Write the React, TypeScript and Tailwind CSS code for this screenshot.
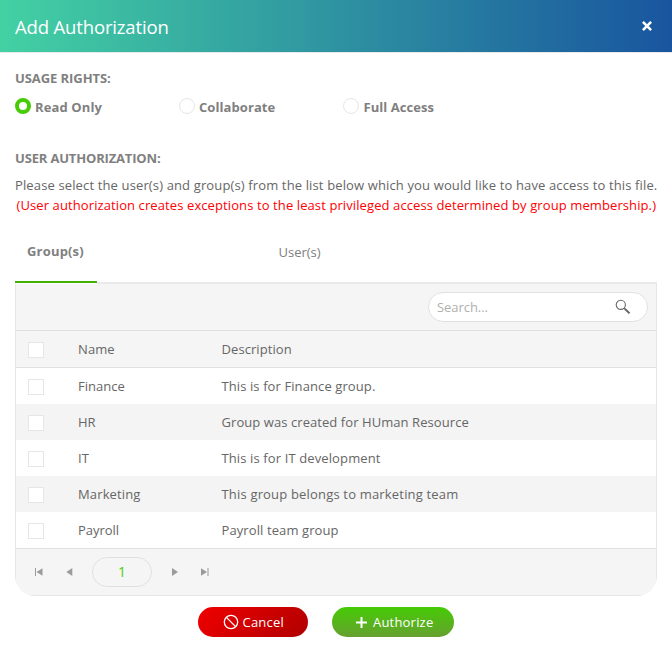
import type { ReactNode } from "react";

const groups = [
  { name: "Finance", description: "This is for Finance group.", nameCls: "tracking-[0px]", descCls: "tracking-[0.1px]" },
  { name: "HR", description: "Group was created for HUman Resource", nameCls: "tracking-[0px]", descCls: "tracking-[0.07px]" },
  { name: "IT", description: "This is for IT development", nameCls: "tracking-[0px]", descCls: "tracking-[0.12px]" },
  { name: "Marketing", description: "This group belongs to marketing team", nameCls: "tracking-[0.14px]", descCls: "tracking-[0.18px]" },
  { name: "Payroll", description: "Payroll team group", nameCls: "tracking-[-0.05px]", descCls: "tracking-[0.1px]" },
];

function Radio({ label, checked = false, cls }: { label: string; checked?: boolean; cls: string }) {
  return (
    <label className="flex w-[164px] items-center">
      <span
        className={
          checked
            ? "size-4 rounded-full border-4 border-[#46cb05] bg-white"
            : "size-4 rounded-full border border-[#e6e6e6] bg-white"
        }
      />
      <span className={"ml-1 pt-0.5 text-[13px] leading-4 font-bold whitespace-nowrap text-[#808080] " + cls}>{label}</span>
    </label>
  );
}

function Checkbox() {
  return <span className="mt-px ml-3 block size-4 border border-[#e6e6e6] bg-white" />;
}

function Row({ name, description, nameCls, descCls, className }: { name: string; description: string; nameCls: string; descCls: string; className: string }) {
  return (
    <div className={"flex h-9 items-center text-[13px] whitespace-nowrap " + className}>
      <div className="w-[62px]"><Checkbox /></div>
      <div className="w-[143px] pt-0.5"><span className={nameCls}>{name}</span></div>
      <div className="pt-0.5 pl-[0.5px]"><span className={descCls}>{description}</span></div>
    </div>
  );
}

function PagerIcon({ children, className }: { children: ReactNode; className: string }) {
  return (
    <svg viewBox="0 0 8 9" className={"h-[9px] w-2 " + className} fill="#9b9b9b">
      {children}
    </svg>
  );
}

export default function App() {
  return (
    <div className="h-[657px] w-[672px] overflow-hidden bg-white font-['Open_Sans','Noto_Sans',sans-serif] text-[13px] text-[#666]">
      <header className="flex h-[53px] items-center justify-between border-b border-[#e9e9ee] bg-[linear-gradient(90deg,#43d1a3,#19559f)] pr-5 pl-[15px] text-white">
        <h1 className="pt-0.5 text-[18.5px] leading-6 whitespace-nowrap"><span className="tracking-[-0.15px]">Add Authorization</span></h1>
        <svg viewBox="0 0 10 10" className="size-2.5" fill="none" stroke="#fff" strokeWidth="2.6">
          <path d="M.9 .9 9.1 9.1M9.1 .9 .9 9.1" />
        </svg>
      </header>

      <main className="px-[15px] pt-[17px]">
        <h2 className="h-4 text-[13px] leading-4 font-bold text-[#808080]"><span className="tracking-[-0.07px]">USAGE RIGHTS:</span></h2>
        <div className="mt-3 flex h-4">
          <Radio label="Read Only" checked cls="tracking-[0.11px]" />
          <Radio label="Collaborate" cls="tracking-[0.08px]" />
          <Radio label="Full Access" cls="pl-[0.5px] tracking-[0.06px]" />
        </div>

        <h2 className="mt-9 h-4 text-[13px] leading-4 font-bold text-[#808080]"><span className="tracking-[-0.17px]">USER AUTHORIZATION:</span></h2>
        <p className="mt-[9px] h-5 leading-5 whitespace-nowrap"><span className="tracking-[0.135px]">Please select the user(s) and group(s) from the list below which you would like to have access to this file.</span></p>
        <p className="h-5 pl-[1.5px] leading-5 whitespace-nowrap text-[#f00]"><span className="tracking-[0.1px]">(User authorization creates exceptions to the least privileged access determined by group membership.)</span></p>

        <div className="mt-[26px] flex h-[42px] text-[13px] leading-5 whitespace-nowrap text-[#808080]">
          <div className="h-[42px] w-[82px] border-b-2 border-[#3fb200] pl-3 font-bold"><span className="tracking-[0.18px]">Group(s)</span></div>
          <div className="h-[43px] flex-1 border-b-2 border-[#e9e9e9] pt-px pl-[181.5px]"><span className="tracking-[0px]">User(s)</span></div>
        </div>

        <section className="mt-px h-[312px] w-[642px] overflow-hidden rounded-b-[20px] bg-white">
          <div className="h-[312px] border-x border-b border-[#e6e6e6]">
            <div className="flex h-[47px] items-center justify-end border-b border-[#e0e0e0] bg-[#f5f5f5] pr-2">
              <div className="flex h-[30px] w-[220px] items-center justify-between rounded-full border border-[#e0e0e0] bg-white pr-4 pl-2 text-[#b0b0b0]">
                <span className="pt-0.5 tracking-[-0.05px]">Search...</span>
                <svg viewBox="0 0 16 16" className="size-4" fill="none" stroke="#666">
                  <circle cx="5.8" cy="5.8" r="4.6" strokeWidth="1.1" />
                  <path d="m9 9 1.5 1.5" strokeWidth="1.1" />
                  <path d="m10 10 4.6 4.4" strokeWidth="2" />
                </svg>
              </div>
            </div>
            <Row name="Name" description="Description" nameCls="tracking-[0.1px]" descCls="tracking-[0.08px]" className="box-content border-b border-[#e0e0e0] bg-[#f5f5f5]" />
            {groups.map((group, i) => (
              <Row key={group.name} {...group} className={i % 2 ? "bg-[#f4f4f4]" : "bg-white"} />
            ))}
            <div className="flex h-[47px] items-center border-t border-[#e0e0e0] bg-[#f5f5f5]">
              <PagerIcon className="ml-[19px]">
                <path d="M0 0h1v8H0zM7.5 .2v7.6L1.5 4z" />
              </PagerIcon>
              <PagerIcon className="ml-[23px]">
                <path d="M6.3 0v8L.3 4z" />
              </PagerIcon>
              <div className="ml-[18px] flex h-[30px] w-[60px] items-center justify-center rounded-full border border-[#e0e0e0] pb-px text-sm font-medium text-[#46d105]">1</div>
              <PagerIcon className="ml-5">
                <path d="M0 0v8l6-4z" />
              </PagerIcon>
              <PagerIcon className="ml-[21px]">
                <path d="M0 .2v7.6L6 4zM6.5 0h1v8h-1z" />
              </PagerIcon>
            </div>
          </div>
        </section>

        <div className="mt-[11px] flex gap-6 pl-[183px] text-[13px] font-medium text-white">
          <button className="flex h-[30px] w-[110px] items-center rounded-full bg-[linear-gradient(135deg,#f00000,#b00000)] pl-[25px]">
            <svg viewBox="0 0 16 16" className="size-4" fill="none" stroke="#fff" strokeWidth="1.3">
              <circle cx="8" cy="8" r="6.7" />
              <path d="m3.4 3.4 9.2 9.2" />
            </svg>
            <span className="ml-[3.5px] pt-px tracking-[0.2px]">Cancel</span>
          </button>
          <button className="flex h-[30px] w-[122px] items-center rounded-full bg-[linear-gradient(180deg,#46cb05,#66a030)] pl-6">
            <svg viewBox="0 0 11 11" className="size-[11px]" fill="none" stroke="#fff" strokeWidth="2">
              <path d="M5.5 0v11M0 5.5h11" />
            </svg>
            <span className="ml-1.5 pt-px tracking-[0.2px]">Authorize</span>
          </button>
        </div>
      </main>
    </div>
  );
}
